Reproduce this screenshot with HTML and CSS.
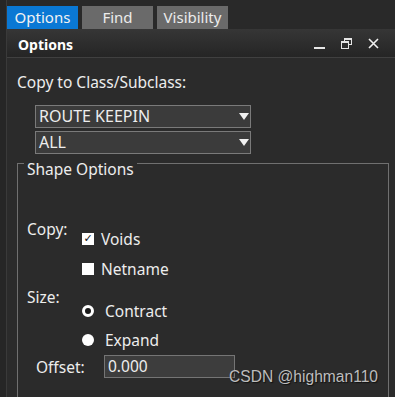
FILE: index.html
```html
<!DOCTYPE html>
<html lang="en">
<head>
    <meta charset="UTF-8">
    <title>Options</title>
    <link rel="stylesheet" href="styles.css">
</head>
<body>
    <div class="app">
        <div class="gutter"></div>
        <div class="main">
            <div class="tabs">
                <div class="tab active">Options</div>
                <div class="tab">Find</div>
                <div class="tab">Visibility</div>
            </div>
            <div class="panel">
                <div class="panel-header">
                    <span class="panel-title">Options</span>
                    <div class="panel-buttons">
                        <span class="btn-min"></span>
                        <svg class="btn-restore" width="11" height="11" viewBox="0 0 11 11">
                            <rect x="3.5" y="0.5" width="7" height="6" fill="none" stroke="#e6e6e6"/>
                            <rect x="0.5" y="3.5" width="7" height="7" fill="#2f2f2f" stroke="#e6e6e6"/>
                            <line x1="0.5" y1="4.5" x2="7.5" y2="4.5" stroke="#e6e6e6"/>
                            <line x1="3.5" y1="1.5" x2="10.5" y2="1.5" stroke="#e6e6e6"/>
                        </svg>
                        <svg class="btn-close" width="11" height="11" viewBox="0 0 11 11">
                            <path d="M1 1 L10 10 M10 1 L1 10" stroke="#f0f0f0" stroke-width="1.6"/>
                        </svg>
                    </div>
                </div>
                <div class="panel-body">
                    <div class="label-copyto">Copy to Class/Subclass:</div>
                    <div class="select">ROUTE KEEPIN<span class="arrow"></span></div>
                    <div class="select">ALL<span class="arrow"></span></div>
                    <div class="group">
                        <div class="legend">Shape Options</div>
                        <div class="row row-copy">
                            <div class="row-label">Copy:</div>
                            <div class="choices">
                                <div class="choice"><span class="check">&#10003;</span>Voids</div>
                                <div class="choice"><span class="check"></span>Netname</div>
                            </div>
                        </div>
                        <div class="row row-size">
                            <div class="row-label">Size:</div>
                            <div class="choices">
                                <div class="choice"><span class="radio selected"></span>Contract</div>
                                <div class="choice"><span class="radio"></span>Expand</div>
                            </div>
                        </div>
                        <div class="offset">
                            <span class="offset-label">Offset:</span>
                            <div class="textbox">0.000</div>
                        </div>
                    </div>
                </div>
            </div>
        </div>
    </div>
    <div class="watermark">CSDN @highman110</div>
</body>
</html>
```

FILE: styles.css
```css
body {
    margin: 0;
    width: 395px;
    height: 397px;
    overflow: hidden;
    background-color: #2b2b2b;
    font-family: "Noto Sans", "Open Sans", sans-serif;
    color: #ededed;
    position: relative;
}

.app {
    display: flex;
    height: 397px;
}

.gutter {
    width: 7px;
    flex-shrink: 0;
    background-color: #262626;
    border-right: 1px solid #3a3a3a;
    box-sizing: border-box;
}

.main {
    flex-grow: 1;
    display: flex;
    flex-direction: column;
}

/* tab strip */
.tabs {
    display: flex;
    gap: 4px;
    padding-top: 6px;
    background-color: #292929;
    height: 23px;
}

.tab {
    width: 71px;
    height: 23px;
    background-color: #6a6a6a;
    color: #ececec;
    font-size: 15px;
    line-height: 22px;
    text-align: center;
}

.tab.active {
    background-color: #0a78d4;
    color: #f2f2f2;
}

.panel {
    flex-grow: 1;
    display: flex;
    flex-direction: column;
}

.panel-header {
    height: 28px;
    background: linear-gradient(#363636, #252525);
    border-bottom: 1px solid #404040;
    display: flex;
    align-items: center;
    padding-left: 11px;
    padding-right: 16px;
}

.panel-title {
    font-size: 14px;
    font-weight: bold;
    color: #ffffff;
    flex-grow: 1;
    padding-top: 2px;
}

.panel-buttons {
    display: flex;
    align-items: center;
    gap: 16px;
    padding-top: 1px;
}

.btn-min {
    width: 11px;
    height: 2px;
    background-color: #e6e6e6;
    margin-top: 9px;
}

.panel-body {
    padding: 14px 0 0 10px;
}

.label-copyto {
    font-size: 15.5px;
    line-height: 20px;
    margin-bottom: 13px;
}

/* dropdowns */
.select {
    width: 216px;
    height: 23px;
    margin-left: 18px;
    margin-bottom: 3px;
    box-sizing: border-box;
    background-color: #3b3b3b;
    border: 1px solid #7a7a7a;
    font-size: 16px;
    line-height: 21px;
    padding-left: 3px;
    position: relative;
}

.arrow {
    position: absolute;
    right: 1px;
    top: 7px;
    width: 0;
    height: 0;
    border-left: 5.5px solid transparent;
    border-right: 5.5px solid transparent;
    border-top: 7px solid #f0f0f0;
}

/* group box */
.group {
    margin-top: 9px;
    border: 1px solid #707070;
    border-bottom: none;
    width: 372px;
    height: 240px;
    box-sizing: border-box;
    position: relative;
    padding-left: 9px;
}

.legend {
    position: absolute;
    top: -5px;
    left: 6px;
    padding: 0 3px;
    background-color: #2b2b2b;
    font-size: 15.5px;
    line-height: 20px;
}

.row {
    display: flex;
}

.row-copy {
    margin-top: 55px;
}

.row-size {
    margin-top: 8px;
}

.row-label {
    width: 55px;
    font-size: 15.5px;
    line-height: 20px;
}

.choices {
    display: flex;
    flex-direction: column;
    gap: 10px;
    padding-top: 10px;
}

.row-size .choices {
    padding-top: 14px;
    gap: 9px;
}

.choice {
    display: flex;
    align-items: center;
    font-size: 15.5px;
    line-height: 20px;
}

.check {
    width: 12px;
    height: 12px;
    background-color: #ffffff;
    margin-right: 7px;
    color: #111;
    font-size: 11px;
    line-height: 12px;
    text-align: center;
    font-family: "DejaVu Sans", sans-serif;
}

.radio {
    width: 12px;
    height: 12px;
    border-radius: 50%;
    background-color: #ffffff;
    margin-right: 11px;
    box-sizing: border-box;
}

.radio.selected {
    border: 3px solid #ffffff;
    background-color: #1a1a1a;
}

.offset {
    display: flex;
    align-items: center;
    margin-top: 5px;
    padding-left: 9px;
}

.offset-label {
    width: 68px;
    font-size: 15.5px;
}

.textbox {
    width: 131px;
    height: 23px;
    box-sizing: border-box;
    background-color: #3d3d3d;
    border: 1px solid #757575;
    font-size: 15.5px;
    line-height: 21px;
    padding-left: 3px;
}

.watermark {
    position: absolute;
    left: 229px;
    top: 368px;
    font-family: "Liberation Sans", Arial, sans-serif;
    font-size: 15.6px;
    line-height: 18px;
    color: #bdbdbd;
    text-shadow: 1px 1px 1px #111;
}
```
